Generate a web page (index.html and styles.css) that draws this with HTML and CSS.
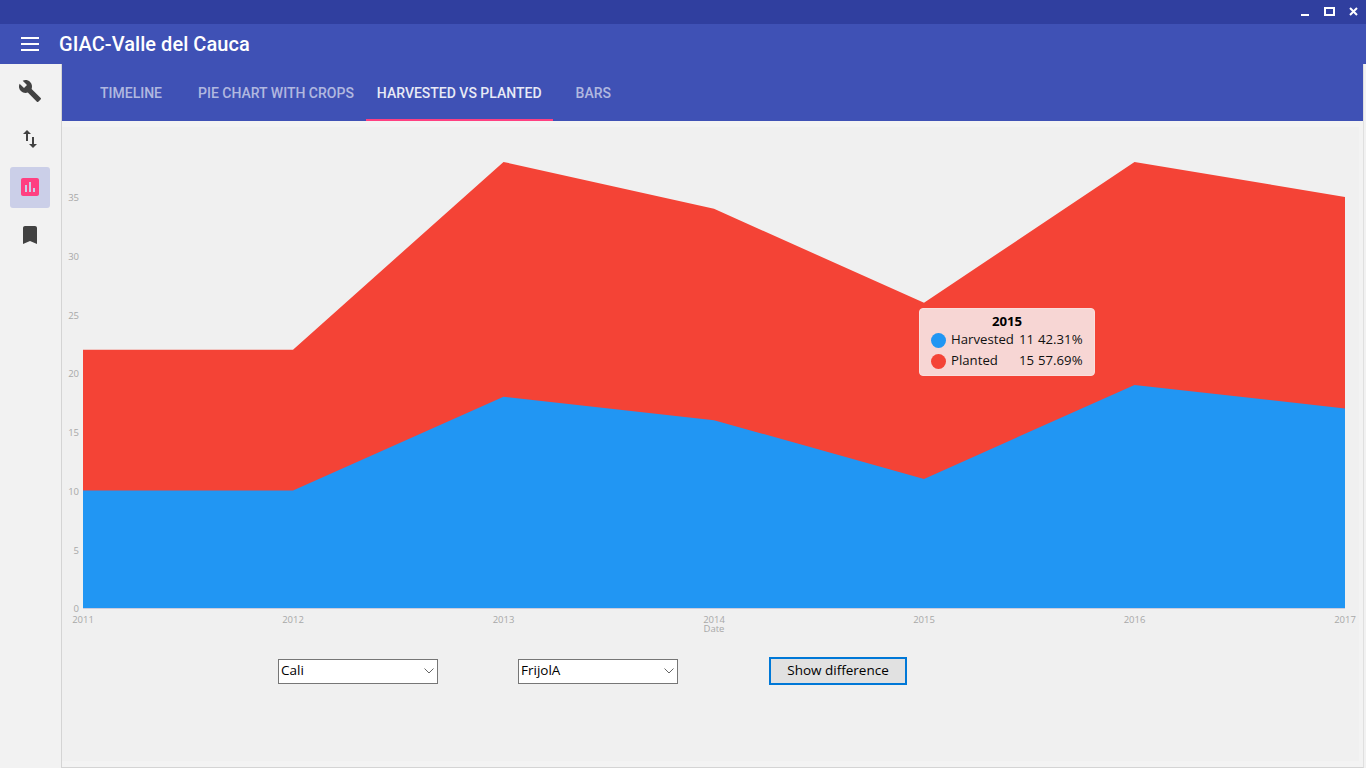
FILE: index.html
```html
<!DOCTYPE html>
<html lang="en">
<head>
    <meta charset="UTF-8">
    <title>GIAC-Valle del Cauca</title>
    <link rel="stylesheet" href="styles.css">
</head>
<body>
    <div class="titlebar">
        <svg class="win-btn win-min" width="8" height="9" viewBox="0 0 8 9"><rect y="7" width="8" height="2"/></svg>
        <svg class="win-btn" width="11" height="9" viewBox="0 0 11 9"><path d="M0 0h11v9H0zM2 2v5h7V2z" fill-rule="evenodd"/></svg>
        <svg class="win-btn" width="9" height="9" viewBox="0 0 9 9"><path d="M1 1l7 7M8 1L1 8" stroke="#fff" stroke-width="2" fill="none"/></svg>
    </div>
    <header class="toolbar">
        <div class="menu-icon"><span></span><span></span><span></span></div>
        <h1>GIAC-Valle del Cauca</h1>
    </header>
    <div class="layout">
        <nav class="sidebar">
            <div class="side-item">
                <svg width="24" height="24" viewBox="0 0 24 24"><path d="M22.7 19l-9.1-9.1c.9-2.3.4-5-1.5-6.9-2-2-5-2.4-7.4-1.3L9 6 6 9 1.6 4.7C.4 7.1.9 10.1 2.9 12.1c1.9 1.9 4.6 2.4 6.9 1.5l9.1 9.1c.4.4 1 .4 1.4 0l2.3-2.3c.5-.4.5-1.1.1-1.4z"/></svg>
            </div>
            <div class="side-item">
                <svg width="24" height="24" viewBox="0 0 24 24"><path d="M9 3L5 6.99h3V14h2V6.99h3L9 3zm7 14.01V10h-2v7.01h-3L15 21l4-3.99h-3z"/></svg>
            </div>
            <div class="side-item active">
                <svg width="24" height="24" viewBox="0 0 24 24"><path d="M19 3H5c-1.1 0-2 .9-2 2v14c0 1.1.9 2 2 2h14c1.1 0 2-.9 2-2V5c0-1.1-.9-2-2-2zM9 17H7v-7h2v7zm4 0h-2V7h2v10zm4 0h-2v-4h2v4z"/></svg>
            </div>
            <div class="side-item">
                <svg width="24" height="24" viewBox="0 0 24 24"><path d="M17 3H7c-1.1 0-1.99.9-1.99 2L5 21l7-3 7 3V5c0-1.1-.9-2-2-2z"/></svg>
            </div>
        </nav>
        <main class="content">
            <div class="tabs">
                <div class="tab">Timeline</div>
                <div class="tab tab-pie">Pie chart with crops</div>
                <div class="tab selected">Harvested vs planted</div>
                <div class="tab tab-bars">Bars</div>
            </div>
            <div class="chart">
                <svg class="chart-svg" width="1297" height="513" viewBox="62 127 1297 513">
                    <path class="area-planted" d="M83 349.700L293 349.700L503.500 161.900L714 208.800L924 302.800L1134.500 161.900L1345 197V608H83Z"/>
                    <path class="area-harvested" d="M83 490.600L293 490.600L503.500 396.700L714 420.200L924 478.900L1134.500 385L1345 408.400V608H83Z"/>
                    <line class="axis" x1="83" y1="608.5" x2="1345" y2="608.5"/>
                    <g class="tick-y">
                        <text x="79" y="612">0</text>
                        <text x="79" y="554">5</text>
                        <text x="79" y="495">10</text>
                        <text x="79" y="436">15</text>
                        <text x="79" y="377">20</text>
                        <text x="79" y="319">25</text>
                        <text x="79" y="260">30</text>
                        <text x="79" y="201">35</text>
                    </g>
                    <g class="tick-x">
                        <text x="83" y="623">2011</text>
                        <text x="293" y="623">2012</text>
                        <text x="503.5" y="623">2013</text>
                        <text x="714" y="623">2014</text>
                        <text x="924" y="623">2015</text>
                        <text x="1134.5" y="623">2016</text>
                        <text x="1345" y="623">2017</text>
                        <text x="714" y="632">Date</text>
                    </g>
                </svg>
                <div class="tooltip">
                    <div class="tooltip-title">2015</div>
                    <div class="tooltip-row">
                        <span class="dot dot-blue"></span>
                        <span class="tooltip-name">Harvested</span>
                        <span class="tooltip-val">11</span>
                        <span>42.31%</span>
                    </div>
                    <div class="tooltip-row">
                        <span class="dot dot-red"></span>
                        <span class="tooltip-name">Planted</span>
                        <span class="tooltip-val">15</span>
                        <span>57.69%</span>
                    </div>
                </div>
            </div>
            <div class="controls">
                <div class="select select-city">Cali
                    <svg width="10" height="6" viewBox="0 0 10 6"><path d="M.5.5L5 5 9.500.5" stroke="#666" fill="none"/></svg>
                </div>
                <div class="select select-crop">FrijolA
                    <svg width="10" height="6" viewBox="0 0 10 6"><path d="M.5.5L5 5 9.500.5" stroke="#666" fill="none"/></svg>
                </div>
                <button class="diff-btn">Show difference</button>
            </div>
        </main>
    </div>
</body>
</html>
```

FILE: styles.css
```css
* {
    box-sizing: border-box;
}
html, body {
    height: 100%;
}
body {
    margin: 0;
    padding: 0;
    overflow: hidden;
    background: #f2f2f2;
    font-family: Roboto, sans-serif;
}
.titlebar {
    height: 24px;
    background: #303f9f;
    display: flex;
    justify-content: flex-end;
    align-items: flex-start;
    gap: 14px;
    padding: 7px 8px 0 0;
}
.win-btn {
    fill: #fff;
}
.win-min {
    margin-right: 1px;
}
.toolbar {
    height: 40px;
    background: #3f51b5;
    display: flex;
    align-items: center;
    padding-left: 21px;
}
.menu-icon {
    width: 18px;
    display: flex;
    flex-direction: column;
    gap: 4px;
    margin-right: 20px;
}
.menu-icon span {
    height: 2px;
    background: #fff;
}
.toolbar h1 {
    margin: 0;
    font-size: 20px;
    font-weight: 500;
    letter-spacing: 0.05px;
    color: #fff;
}
.layout {
    display: flex;
    height: 704px;
}
.sidebar {
    width: 61px;
    display: flex;
    flex-direction: column;
    gap: 7px;
    padding: 7px 0 0 10px;
}
.side-item {
    width: 40px;
    height: 41px;
    padding: 8px 8px 9px;
    border-radius: 3px;
}
.side-item svg {
    display: block;
    fill: #424242;
}
.side-item.active {
    background: #cbcfe8;
}
.side-item.active svg {
    fill: #ff4081;
}
.content {
    width: 1303px;
    background: #f3f3f3;
    border-left: 1px solid #d4d4d4;
    border-right: 1px solid #e0e0e0;
    border-bottom: 1px solid #d4d4d4;
}
.tabs {
    height: 57px;
    background: #3f51b5;
    display: flex;
    padding-left: 26px;
}
.tab {
    padding: 0 12px;
    line-height: 58px;
    font-size: 14px;
    font-weight: 500;
    text-transform: uppercase;
    color: rgba(255, 255, 255, 0.6);
}
.tab-pie {
    margin-left: 12px;
}
.tab-bars {
    padding-left: 23px;
}
.tab.selected {
    padding: 0 11px;
    color: #e8eaf6;
    border-bottom: 2px solid #ff4081;
}
.chart {
    position: relative;
    height: 519px;
    margin-right: 4px;
    background: #f0f0f0;
    border-top: 6px solid #f3f3f3;
}
.chart-svg {
    display: block;
}
.area-planted {
    fill: #f44336;
}
.area-harvested {
    fill: #2196f3;
}
.axis {
    stroke: #ccd;
}
.tick-y text, .tick-x text {
    font-family: "Open Sans", sans-serif;
    font-size: 9.5px;
    fill: #a8a8a8;
}
.tick-y text {
    text-anchor: end;
}
.tick-x text {
    text-anchor: middle;
}
.tooltip {
    position: absolute;
    left: 857px;
    top: 181px;
    width: 176px;
    height: 68px;
    padding: 4px 11px 0;
    background: #f7d6d4;
    border: 1px solid #fadfdd;
    border-radius: 4px;
    font-family: "Open Sans", sans-serif;
    font-size: 13.2px;
    line-height: 18px;
    color: #111;
}
.tooltip-title {
    text-align: center;
    font-weight: 700;
    line-height: 16px;
    color: #000;
}
.tooltip-row {
    display: flex;
    align-items: center;
    height: 20px;
    margin-top: 1px;
    white-space: nowrap;
}
.tooltip-row span {
    padding-bottom: 2px;
}
.dot {
    width: 15px;
    height: 15px;
    border-radius: 50%;
    margin-right: 5px;
}
.dot-blue {
    background: #2196f3;
}
.dot-red {
    background: #f44336;
}
.tooltip-name {
    width: 68px;
}
.tooltip-val {
    width: 19px;
}
.controls {
    height: 121px;
    margin-right: 4px;
    display: flex;
    align-items: flex-start;
    padding: 17px 0 0 216px;
    background: #f0f0f0;
    font-family: "Open Sans", sans-serif;
    font-size: 13.5px;
    color: #000;
}
.select {
    width: 160px;
    height: 25px;
    margin-top: 2px;
    padding: 0 0 2px 2px;
    background: #fff;
    border: 1px solid #767676;
    line-height: 21px;
    display: flex;
    justify-content: space-between;
    align-items: center;
}
.select svg {
    margin-right: 3px;
    margin-top: 1px;
}
.select-crop {
    margin-left: 80px;
}
.diff-btn {
    width: 138px;
    height: 28px;
    margin-left: 91px;
    padding: 0 0 3px;
    background: #e1e1e1;
    border: 2px solid #0078d7;
    font-family: "Open Sans", sans-serif;
    font-size: 13.5px;
    color: #000;
}
```
